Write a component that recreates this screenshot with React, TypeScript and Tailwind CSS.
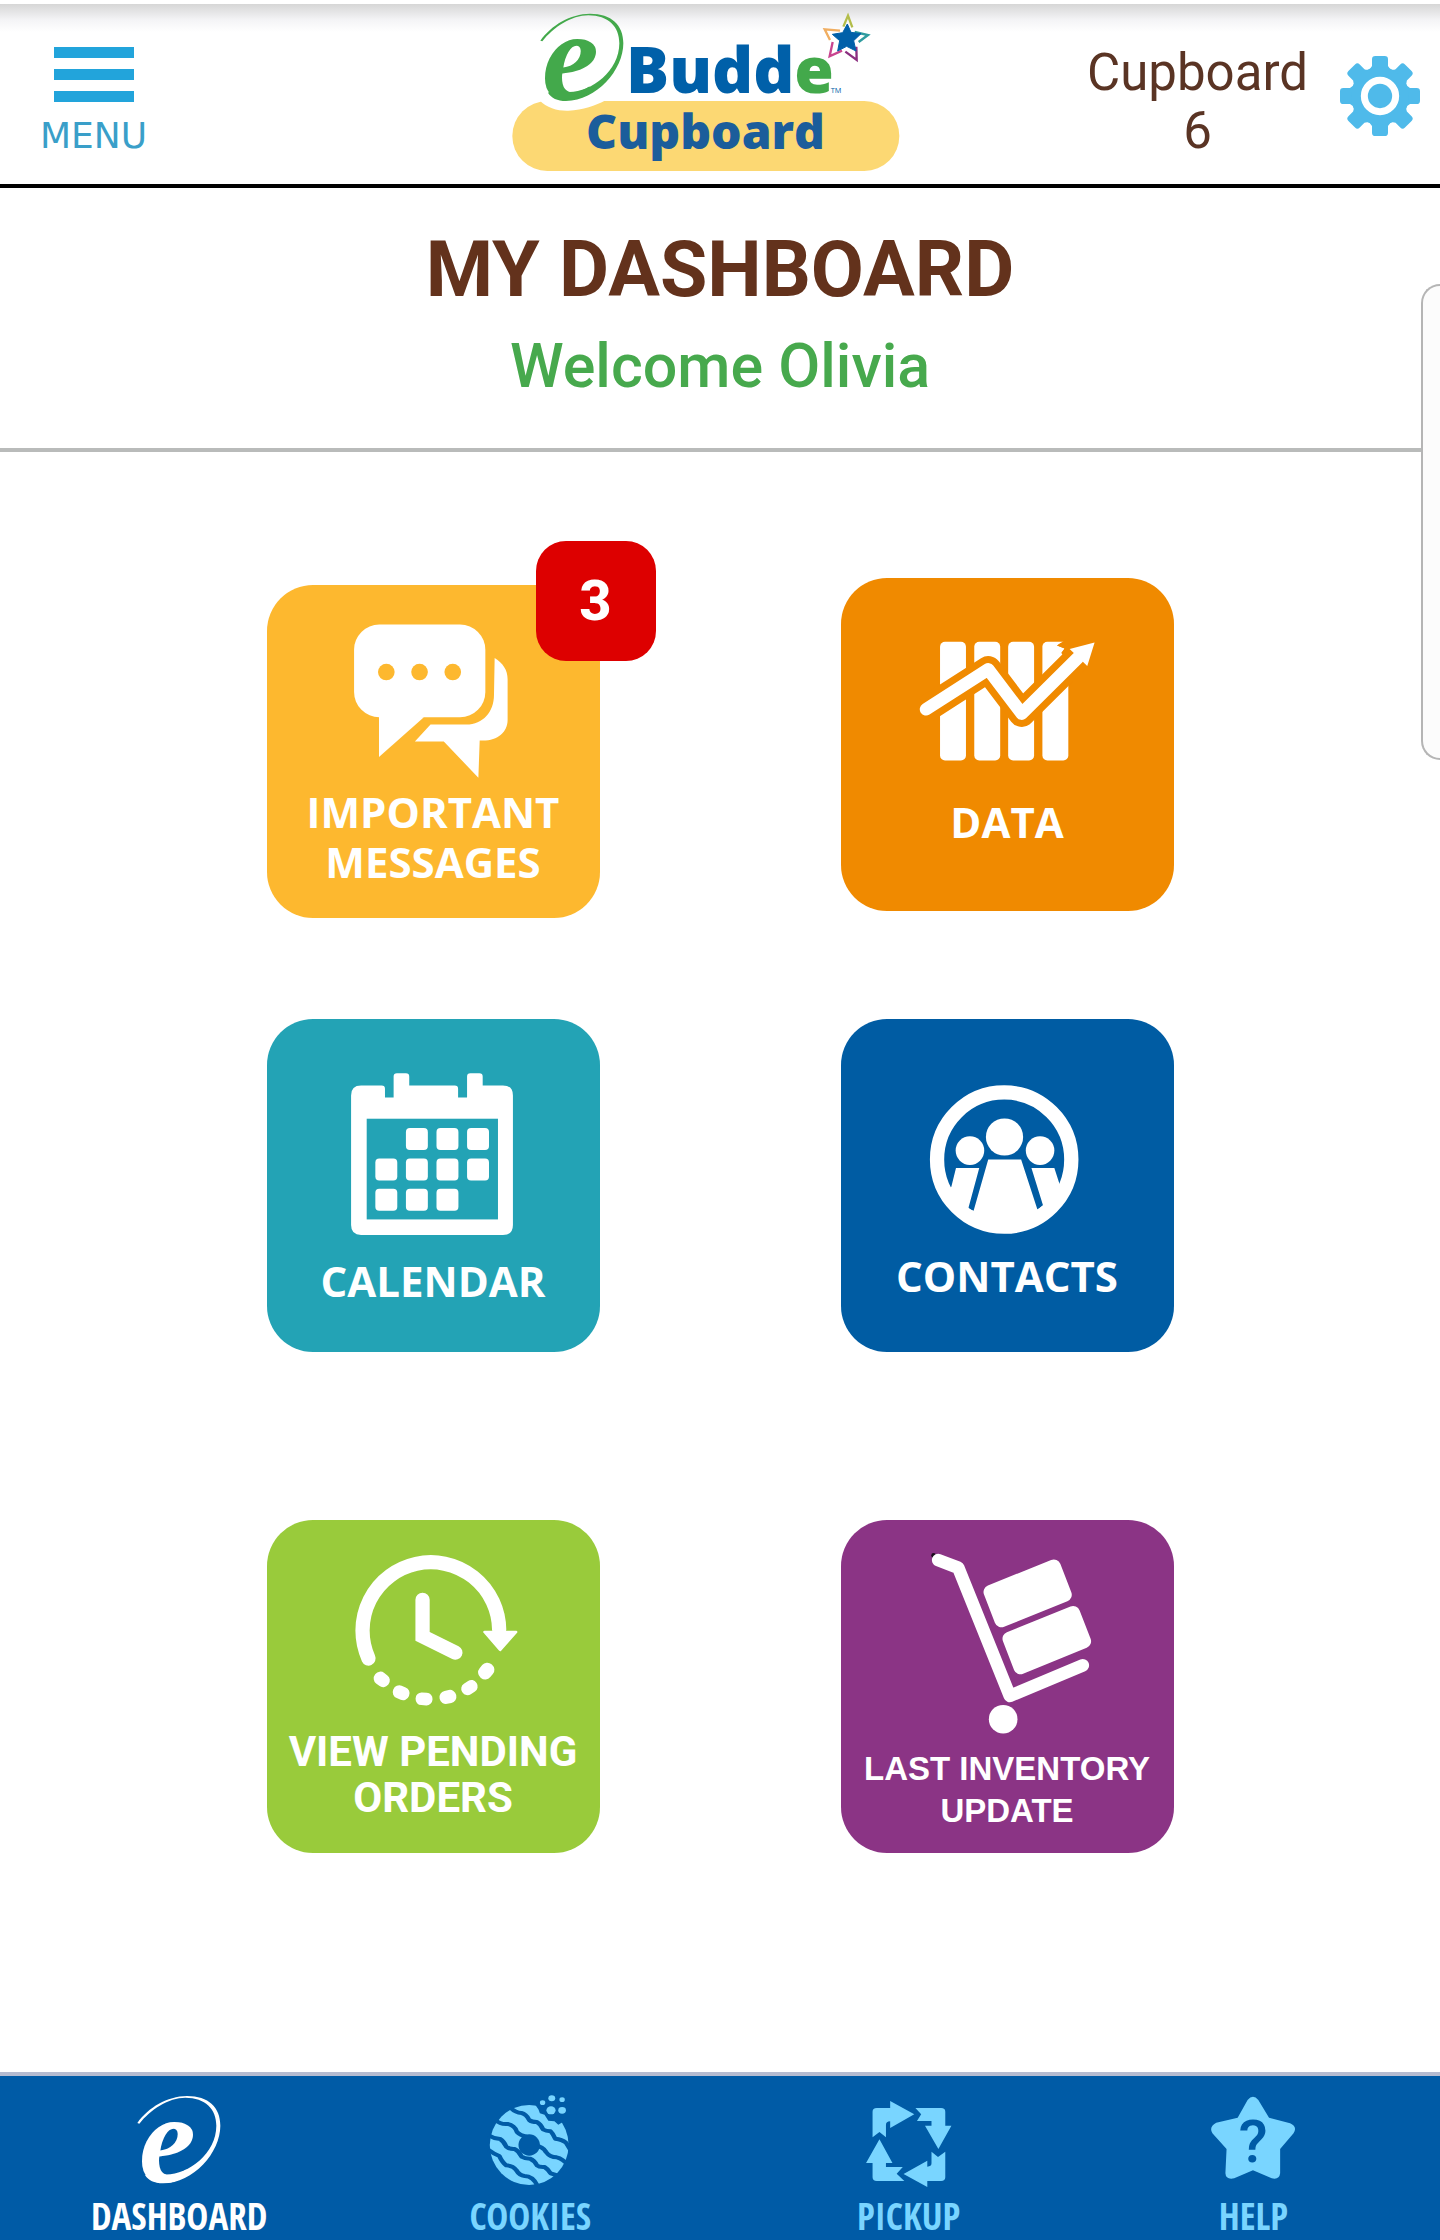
import React from 'react';

interface Tile {
  label: string[];
  color: string;
  font: string;
  icon: React.ReactNode;
  badge?: number;
}

interface NavItem {
  label: string;
  active?: boolean;
  icon: React.ReactNode;
}

const SwashE: React.FC<{ fill: string }> = ({ fill }) => (
  <g fill={fill}>
    <path d="M181 122 C215 75 270 42 330 41 C395 41 430 75 430 130 C430 210 350 302 258 303 C232 303 214 294 204 278 L236 262 C244 272 252 276 262 276 C330 280 418 215 418 130 C418 80 385 46 325 46 C275 46 220 82 187 124 Z" />
    <text
      x="186"
      y="298"
      fontSize="384"
      className="font-['Liberation_Serif',serif] font-bold italic"
    >
      e
    </text>
  </g>
);

const Logo: React.FC = () => (
  <svg viewBox="96 12 1248 540" className="h-[180px] w-[416px] overflow-visible" role="img" aria-label="eBudde Cupboard">
    <rect x="97" y="303" width="1161" height="210" rx="105" fill="#fcd873" />
    <path d="M178 300 C200 325 235 333 265 332 C310 330 345 318 378 300 Z" fill="#fff" />
    <SwashE fill="#43a94b" />
    <text x="438" y="278" fontSize="192" fill="#0060a9" className="font-['Open_Sans',sans-serif] font-extrabold">
      Budd<tspan fill="#43a94b">e</tspan>
    </text>
    <text x="1052" y="280" fontSize="22" fill="#0060a9" className="font-['Open_Sans',sans-serif]">
      TM
    </text>
    <text x="318" y="447" fontSize="144" fill="#1b5d9b" className="font-['Open_Sans',sans-serif] font-extrabold">
      Cupboard
    </text>
    <g fill="none" strokeWidth="7">
      <path d="M1090 80 L1104 47 L1117 82" stroke="#b3bd4a" />
      <path d="M1124 96 L1164 105 L1136 126" stroke="#2f9c9f" />
      <path d="M1096 155 L1130 180 L1129 140" stroke="#8b2f80" />
      <path d="M1058 126 L1049 169 L1086 152" stroke="#c9458f" />
      <path d="M1050 120 L1034 88 L1080 92" stroke="#f0ae62" />
    </g>
    <path
      d="M1102 72 L1113 97 L1143 101 L1121 122 L1128 153 L1100 139 L1073 153 L1079 122 L1057 103 L1088 98 Z"
      fill="#0060a9"
      stroke="#0060a9"
      strokeWidth="3"
    />
  </svg>
);

const GearIcon: React.FC = () => (
  <svg viewBox="897 168 240 240" className="size-20" fill="#4fbaea">
    {[0, 45, 90, 135, 180, 225, 270, 315].map((angle) => (
      <path
        key={angle}
        transform={`rotate(${angle} 1017 288)`}
        d="M1003 168 H1031 Q1041 168 1041 178 V198 Q1044 206 1056 212 H978 Q990 206 993 198 V178 Q993 168 1003 168 Z"
      />
    ))}
    <circle cx="1017" cy="288" r="86" />
    <circle cx="1017" cy="288" r="47" fill="none" stroke="#fff" strokeWidth="21" />
  </svg>
);

const MessagesIcon = (
  <svg viewBox="50 195 1002 606" className="h-[202px] w-full" fill="#fff">
    <rect x="312" y="313" width="395" height="279" rx="76" />
    <path d="M387 580 V712 L522 592 Z" />
    <path d="M735 414 C760 430 774 450 774 478 V600 C774 635 745 662 700 662 H690 L686 774 L582 665 H495 L542 614 H650 C700 614 733 575 733 525 Z" />
    <g fill="#fdb82f">
      <circle cx="409" cy="456" r="25" />
      <circle cx="509" cy="456" r="25" />
      <circle cx="609" cy="456" r="25" />
    </g>
  </svg>
);

const DataIcon = (
  <svg viewBox="62 55 1002 657" className="h-[219px] w-full" fill="#fff">
    {[360, 463, 565, 668].map((x) => (
      <rect key={x} x={x} y="246" width="78" height="357" rx="15" />
    ))}
    <path d="M738 240 L712 257 L735 266 L725 280 L740 300 L790 300 L790 240 Z" fill="#f08a00" />
    <g fill="none" strokeLinejoin="round" strokeLinecap="round">
      <path d="M318 449 L505 329 L606 462 L775 294" stroke="#f08a00" strokeWidth="80" strokeLinecap="butt" />
      <path d="M318 449 L505 329 L606 462 L775 294" stroke="#fff" strokeWidth="38" />
    </g>
    <path d="M722 250 L712 257 L735 266 L725 280 L764 268 L738 246 Z" fill="#f08a00" />
    <path d="M825 248 L750 268 L803 319 Z" />
  </svg>
);

const calendarCells = [
  [464, 385], [556, 385], [648, 385],
  [372, 477], [464, 477], [556, 477], [648, 477],
  [372, 568], [464, 568], [556, 568],
];

const CalendarIcon = (
  <svg viewBox="46 58 1002 711" className="h-[237px] w-full" fill="#fff">
    <path d="M329 257 H391 Q401 257 401 267 V293 H427 V230 Q427 220 437 220 H464 Q474 220 474 230 V257 H611 Q621 257 621 267 V293 H648 V230 Q648 220 658 220 H685 Q695 220 695 230 V257 H756 Q786 257 786 287 V677 Q786 707 756 707 H329 Q299 707 299 677 V287 Q299 257 329 257 Z" />
    <rect x="346" y="357" width="395" height="303" fill="#23a3b5" />
    {calendarCells.map(([x, y]) => (
      <rect key={`${x}-${y}`} x={x} y={y} width="66" height="66" rx="12" />
    ))}
  </svg>
);

const ContactsIcon = (
  <svg viewBox="64 58 1002 696" className="h-[232px] w-full" fill="#fff">
    <clipPath id="contacts-ring">
      <circle cx="555" cy="480" r="210" />
    </clipPath>
    <circle cx="555" cy="480" r="202" fill="none" stroke="#fff" strokeWidth="43" />
    <circle cx="556" cy="412" r="56" />
    <circle cx="452" cy="453" r="43" />
    <circle cx="663" cy="453" r="43" />
    <path
      clipPath="url(#contacts-ring)"
      d="M410 505 H480 L447 627 L463 634 L507 480 H606 L655 630 L672 618 L637 505 H706 L722 555 L760 620 L650 700 H460 L350 620 L396 562 Z"
    />
  </svg>
);

const PendingIcon = (
  <svg viewBox="44 62 1004 627" className="h-[209px] w-full" fill="#fff">
    <g fill="none" stroke="#fff" strokeWidth="43" strokeLinecap="round">
      <path d="M350 478 A206 206 0 1 1 744 391" />
      <path d="M513 301 V411 L612 460" />
    </g>
    <path d="M700 398 H795 L747 452 Z" stroke="#fff" strokeWidth="8" strokeLinejoin="round" />
    <rect x="365" y="521" width="50" height="40" rx="19" transform="rotate(38 390 541)" />
    <rect x="423" y="561" width="51" height="40" rx="19" transform="rotate(22 448 581)" />
    <rect x="492" y="581" width="51" height="38" rx="18" transform="rotate(3 518 600)" />
    <rect x="564" y="574" width="51" height="40" rx="19" transform="rotate(-12 589 594)" />
    <rect x="629" y="547" width="51" height="38" rx="18" transform="rotate(-33 654 566)" />
    <rect x="679" y="495" width="52" height="42" rx="20" transform="rotate(-50 705 516)" />
  </svg>
);

const InventoryIcon = (
  <svg viewBox="64 60 1000 684" className="h-[228px] w-full" fill="#fff">
    <circle cx="342" cy="166" r="7" fill="#1c0a1c" />
    <path
      d="M356 180 L416 203 L571 588 L790 496"
      fill="none"
      stroke="#fff"
      strokeWidth="38"
      strokeLinecap="round"
      strokeLinejoin="round"
    />
    <g stroke="#fff" strokeWidth="42" strokeLinejoin="round">
      <path d="M513 276 L703 199 L736 284 L546 361 Z" />
      <path d="M570 416 L761 339 L794 424 L603 502 Z" />
    </g>
    <circle cx="551" cy="658" r="43" />
  </svg>
);

const tileRows: Tile[][] = [
  [
    {
      label: ['IMPORTANT', 'MESSAGES'],
      color: 'bg-[#fdb82f] mt-[7px]',
      font: "font-['Open_Sans',sans-serif] text-[42px] leading-[50px]",
      icon: MessagesIcon,
      badge: 3,
    },
    {
      label: ['DATA'],
      color: 'bg-[#f08a00]',
      font: "font-['Open_Sans',sans-serif] text-[42px] leading-[50px]",
      icon: DataIcon,
    },
  ],
  [
    {
      label: ['CALENDAR'],
      color: 'bg-[#23a3b5]',
      font: "font-['Open_Sans',sans-serif] text-[42px] leading-[50px]",
      icon: CalendarIcon,
    },
    {
      label: ['CONTACTS'],
      color: 'bg-[#005ca3]',
      font: "font-['Open_Sans',sans-serif] text-[42px] leading-[50px]",
      icon: ContactsIcon,
    },
  ],
  [
    {
      label: ['VIEW PENDING', 'ORDERS'],
      color: 'bg-[#99cb3b]',
      font: "font-['Roboto',sans-serif] text-[42px] leading-[46px]",
      icon: PendingIcon,
    },
    {
      label: ['LAST INVENTORY', 'UPDATE'],
      color: 'bg-[#8b3485]',
      font: "font-['Liberation_Sans',sans-serif] text-[33px] leading-[42px]",
      icon: InventoryIcon,
    },
  ],
];

const CookieIcon = (
  <svg viewBox="410 42 120 104" className="h-[104px] w-[120px]" fill="#79d5ff">
    <g transform="scale(0.3827 0.3333)">
      <ellipse cx="1226" cy="285" rx="103" ry="120" />
      <g fill="none" stroke="#005ba6" strokeWidth="12" strokeLinejoin="round">
        <path d="M1178 174 Q1190 188 1206 189 Q1218 192 1226 210 Q1232 216 1246 216 Q1256 222 1262 238 Q1270 243 1282 244 Q1288 250 1294 266 Q1312 268 1322 278 L1334 300" />
        <path d="M1138 210 Q1150 224 1170 222 Q1188 226 1194 246 Q1202 256 1220 260" />
        <path d="M1240 286 Q1262 290 1270 306 Q1280 322 1298 322 Q1314 326 1328 346" />
        <path d="M1120 256 Q1134 266 1150 267 Q1160 274 1166 290 Q1174 298 1188 297 Q1200 304 1206 320 Q1214 326 1228 326 Q1240 332 1246 346 Q1252 352 1266 351 Q1276 358 1282 370 L1304 378" />
        <path d="M1120 300 Q1134 312 1148 318 Q1156 338 1166 346 Q1184 348 1192 360 Q1200 376 1214 378 Q1236 378 1248 408" />
      </g>
      <ellipse cx="1226" cy="285" rx="28" ry="32" fill="#005ba6" />
      <path
        d="M1238 158 L1250 178 L1254 190 L1266 194 L1276 212 L1292 214 L1302 224 L1314 216 L1350 216 L1350 120 L1238 120 Z"
        fill="#005ba6"
      />
      <circle cx="1285" cy="145" r="9" />
      <circle cx="1312" cy="149" r="7" />
      <circle cx="1261" cy="158" r="7" />
      <circle cx="1283" cy="181" r="12" />
      <circle cx="1312" cy="181" r="10" />
    </g>
  </svg>
);

const PickupIcon = (
  <svg viewBox="48 42 120 104" className="h-[104px] w-[120px]" fill="#79d5ff">
    <g transform="scale(0.3827 0.3333)">
      <path d="M187 262 V185 Q187 174 198 174 H233 V153 L296 193 L233 234 V214 Q222 214 222 225 V262 L205 246 Z" />
      <path d="M299 174 H366 Q377 174 377 185 V227 H393 L359 297 L324 227 H341 V213 H303 L314 193 Z" />
      <path d="M341 305 L358 321 L377 305 V382 Q377 393 366 393 H330 V411 L268 372 L330 332 V350 Q341 350 341 340 Z" />
      <path d="M205 268 L239 339 H222 V351 H266 L250 371 L270 393 H198 Q187 393 187 382 V339 H170 Z" />
    </g>
  </svg>
);

const HelpIcon = (
  <svg viewBox="392 42 120 104" className="h-[104px] w-[120px]" fill="#79d5ff">
    <path
      transform="scale(0.3827 0.3333)"
      d="M1167 150 Q1181 130 1195 150 L1223 203 L1278 220 Q1298 230 1287 250 L1252 297 V370 Q1250 390 1230 385 L1181 361 L1132 385 Q1110 390 1109 370 L1112 297 L1075 250 Q1065 230 1085 218 L1141 203 Z"
    />
    <text x="452" y="112" fontSize="60" textAnchor="middle" fill="#005ba6" className="font-['Roboto',sans-serif] font-medium">
      ?
    </text>
  </svg>
);

const navItems: NavItem[] = [
  {
    label: 'DASHBOARD',
    active: true,
    icon: (
      <svg viewBox="126 29 360 312" className="h-[104px] w-[120px] overflow-visible">
        <SwashE fill="#fff" />
      </svg>
    ),
  },
  { label: 'COOKIES', icon: CookieIcon },
  { label: 'PICKUP', icon: PickupIcon },
  { label: 'HELP', icon: HelpIcon },
];

const DashboardTile: React.FC<{ tile: Tile }> = ({ tile }) => (
  <button
    type="button"
    className={`relative flex size-[333px] flex-col items-center rounded-[46px] font-bold text-white ${tile.color} ${tile.font}`}
  >
    {tile.icon}
    {tile.label.map((line) => (
      <span key={line} className="block whitespace-nowrap">{line}</span>
    ))}
    {tile.badge && (
      <span className="absolute -top-11 -right-14 flex size-[120px] items-center justify-center rounded-[30px] bg-[#dd0000] font-['Roboto',sans-serif] text-[56px] font-extrabold">
        {tile.badge}
      </span>
    )}
  </button>
);

const App: React.FC = () => {
  return (
    <div className="relative flex min-h-screen flex-col bg-white font-['Roboto',sans-serif]">
      <header className="grid grid-cols-[1fr_auto_1fr] items-center border-t-4 border-b-4 border-t-white border-b-black bg-[linear-gradient(#d6d6d6,#f4f4f6_16px,#ffffff_28px)] bg-origin-padding px-5">
        <button type="button" className="ml-5 flex flex-col items-center justify-self-start pt-3">
          <span className="flex flex-col gap-[11px]">
            <span className="h-[11px] w-20 bg-[#22a4db]" />
            <span className="h-[11px] w-20 bg-[#22a4db]" />
            <span className="h-[11px] w-20 bg-[#22a4db]" />
          </span>
          <span className="mt-4 font-['DejaVu_Sans',sans-serif] text-[36px] leading-9 text-[#3a9fc9]">MENU</span>
        </button>
        <Logo />
        <div className="flex items-center gap-8 justify-self-end pt-1">
          <p className="pt-3 text-center text-[51px] leading-[58px] text-[#5a3424]">
            Cupboard
            <br />6
          </p>
          <button type="button" aria-label="Settings">
            <GearIcon />
          </button>
        </div>
      </header>

      <section className="flex flex-col items-center gap-5 border-b-4 border-[#b9bbba] pt-[42px] pb-[46px]">
        <h1 className="text-[77px] leading-[80px] font-bold text-[#63321c]">MY DASHBOARD</h1>
        <p className="text-[61px] leading-[72px] font-medium text-[#47a94d]">Welcome Olivia</p>
      </section>

      <main className="flex flex-1 flex-col gap-[101px] pt-[126px]">
        {tileRows.map((row, index) => (
          <div
            key={index}
            className="flex items-start justify-center gap-[241px] last:pt-[67px]"
          >
            {row.map((tile) => (
              <DashboardTile key={tile.label[0]} tile={tile} />
            ))}
          </div>
        ))}
      </main>

      <nav className="grid grid-cols-[358fr_344fr_412fr_277fr] border-t-4 border-[#b4bbd0] bg-[#005ba6] pt-4 pr-12 pb-1">
        {navItems.map((item) => (
          <a
            key={item.label}
            href="#"
            className={`flex flex-col items-center font-['Open_Sans_Condensed','Liberation_Sans_Narrow',sans-serif] text-[37px] leading-10 font-bold ${
              item.active ? 'text-white' : 'text-[#79d5ff]'
            }`}
          >
            {item.icon}
            {item.label}
          </a>
        ))}
      </nav>

      {/* edge panel handle */}
      <div className="absolute top-[284px] right-0 h-[476px] w-[19px] rounded-l-[20px] border-2 border-r-0 border-[#b5b5b5] bg-[#fcfcfc]" />
    </div>
  );
};

export default App;
